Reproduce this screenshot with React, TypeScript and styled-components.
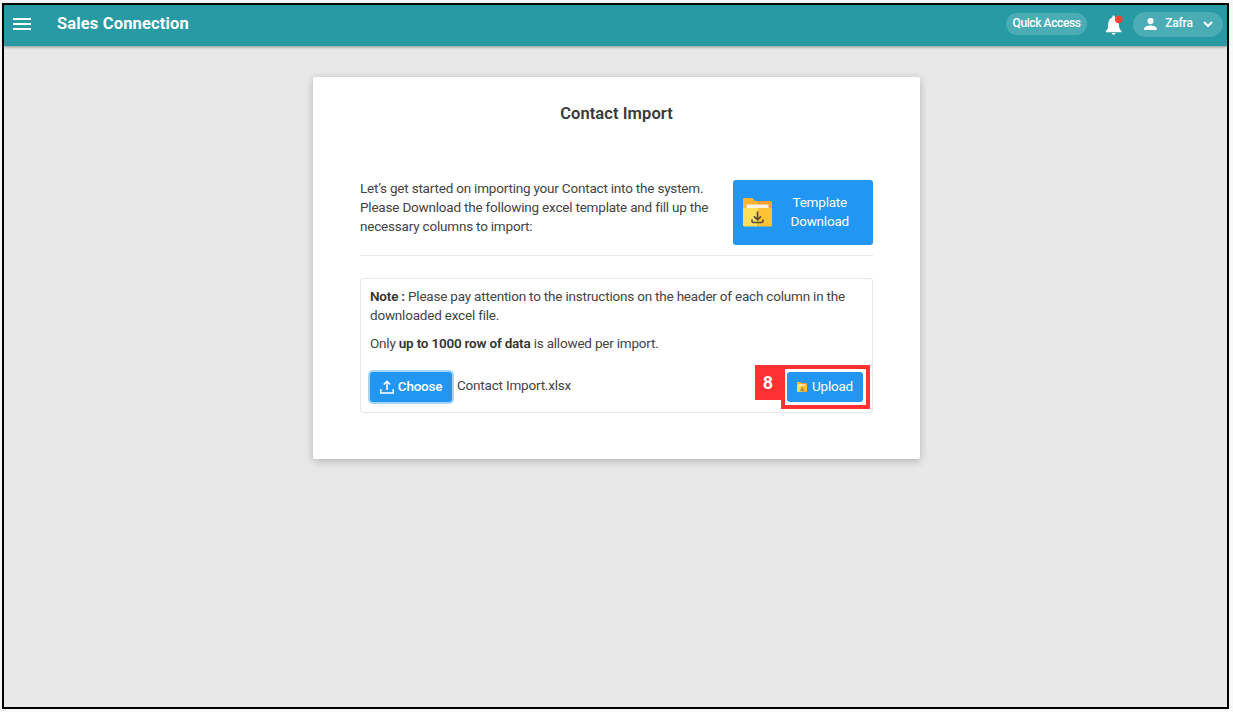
import React from "react";
import styled, { createGlobalStyle } from "styled-components";

const GlobalStyle = createGlobalStyle`
  * { box-sizing: border-box; }
  body {
    margin: 0;
    background: #f8f8f8;
    font-family: Roboto, "Liberation Sans", sans-serif;
    color: #444;
  }
  button { font: inherit; border: 0; cursor: pointer; }
`;

const Page = styled.div`
  height: 712px;
  padding: 3px 4px 3px 2px;
`;

const Frame = styled.div`
  height: 706px;
  border: 2px solid #000;
  background: #e8e8e8;
  display: flex;
  flex-direction: column;
  align-items: center;
`;

const TopBar = styled.header`
  align-self: stretch;
  flex: none;
  height: 41px;
  padding: 0 4px 0 9px;
  display: flex;
  align-items: center;
  background: #289aa4;
  color: #fff;
  box-shadow: 0 1px 3px rgba(0, 0, 0, 0.4);
`;

const MenuIcon = styled.svg`
  width: 18px;
  height: 14px;
  margin-top: -3px;
`;

const Brand = styled.div`
  flex: 1;
  margin: -4px 0 0 26px;
  font-size: 16.5px;
  font-weight: 700;
  letter-spacing: 0.15px;
`;

const Pill = styled.button<{ $width: number; $height: number; $spacing: number }>`
  width: ${(p) => p.$width}px;
  height: ${(p) => p.$height}px;
  padding: 0 0 2px;
  margin-top: -3px;
  border-radius: 13px;
  display: flex;
  align-items: center;
  justify-content: center;
  background: #4aacb4;
  color: #fff;
  font-size: 12px;
  font-weight: 500;
  letter-spacing: ${(p) => p.$spacing}px;
`;

const BellIcon = styled.svg`
  width: 19px;
  height: 20px;
  margin: -1px 9px 0 18px;
`;

const UserIcon = styled.svg`
  width: 13px;
  height: 12px;
  margin: 2px 8px 0 1px;
`;

const Chevron = styled.svg`
  width: 10px;
  height: 7px;
  margin: 3px 0 0 10px;
`;

const Card = styled.main`
  width: 607px;
  height: 382px;
  margin-top: 31px;
  margin-left: 2px;
  padding: 27px 47px 0;
  border-radius: 2px;
  background: #fff;
  box-shadow: 0 2px 9px rgba(0, 0, 0, 0.24);
`;

const Title = styled.h1`
  margin: 0;
  font-size: 16.5px;
  line-height: 20px;
  font-weight: 600;
  letter-spacing: 0.08px;
  text-align: center;
  color: #383838;
`;

const Intro = styled.section`
  height: 76px;
  margin-top: 56px;
  display: flex;
  justify-content: space-between;
  border-bottom: 1px solid #e6e6e6;
`;

const Text = styled.p`
  margin: -1px 0 0;
  font-size: 13.5px;
  line-height: 19px;
  letter-spacing: -0.2px;
  white-space: nowrap;
  b { font-weight: 600; color: #333; }
`;

const DownloadButton = styled.button`
  width: 140px;
  height: 65px;
  padding: 0 24px 2px 10px;
  display: flex;
  align-items: center;
  justify-content: space-between;
  border-radius: 3px;
  background: #2196f3;
  color: #fff;
  font-size: 13.5px;
  letter-spacing: -0.2px;
  line-height: 19px;
  svg { margin-top: 2px; }
`;

const NoteBox = styled.section`
  height: 135px;
  margin-top: 22px;
  padding: 9px 2px 0 9px;
  border: 1px solid #e6e6e6;
  border-radius: 3px;
`;

const Limit = styled(Text)`
  margin-top: 9px;
`;

const Actions = styled.div`
  margin-top: 12px;
  display: flex;
  align-items: flex-start;
`;

const ChooseButton = styled.button`
  width: 82px;
  height: 30px;
  margin: 7px 5px 0 0;
  padding: 0 0 2px;
  display: flex;
  align-items: center;
  justify-content: center;
  gap: 4px;
  border-radius: 3px;
  background: #2196f3;
  box-shadow: 0 0 0 2px #a6d5fa;
  color: #fff;
  font-size: 13.5px;
  font-weight: 500;
  letter-spacing: -0.25px;
  svg { margin-top: 2px; }
`;

const FileName = styled(Text)`
  flex: 1;
  margin-top: 11px;
`;

const StepBadge = styled.div`
  width: 26px;
  height: 35px;
  display: flex;
  align-items: center;
  justify-content: center;
  background: #ff3131;
  color: #fff;
  font-size: 18px;
  font-weight: 700;
`;

const Highlight = styled.div`
  width: 89px;
  height: 44px;
  padding: 3px 2px;
  border: 4px solid #ff3131;
`;

const UploadButton = styled.button`
  width: 76px;
  height: 30px;
  padding: 0 0 2px;
  display: flex;
  align-items: center;
  justify-content: center;
  gap: 5px;
  border-radius: 3px;
  background: #2196f3;
  color: #fff;
  font-size: 13.5px;
  letter-spacing: -0.2px;
  svg { margin-top: 2px; }
`;

const FolderIcon = ({ size }: { size: number }) => (
  <svg width={size} height={size} viewBox="0 0 29 29">
    <path d="M1.500 0H9l3 3h15.500a1.500 1.500 0 0 1 1.500 1.500V20H0V1.500A1.500 1.500 0 0 1 1.500 0z" fill="#ff9f33" />
    <path d="M1.500 0H9l3 3h2.500V20H0V1.500A1.500 1.500 0 0 1 1.500 0z" fill="#ffb52e" />
    <path d="M3.500 6.500h22V12h-22z" fill="#fdf0e4" />
    <path d="M0 10h14.500v18.500h-13A1.500 1.500 0 0 1 0 27z" fill="#ffdf5a" />
    <path d="M14.500 10H29v17a1.500 1.500 0 0 1-1.500 1.500h-13z" fill="#ffc233" />
    <path d="M14.500 13.500v8M11 18.300l3.500 3.500 3.500-3.500M9 21.500v1.500a1.500 1.500 0 0 0 1.500 1.500h8a1.500 1.500 0 0 0 1.500-1.500v-1.500" fill="none" stroke="#584b41" strokeWidth="1.700" />
  </svg>
);

export default function App() {
  return (
    <>
      <GlobalStyle />
      <Page>
        <Frame>
          <TopBar>
            <MenuIcon viewBox="0 0 18 14">
              <path d="M0 2h18M0 7h18M0 12h18" stroke="#fff" strokeWidth="2" />
            </MenuIcon>
            <Brand>Sales Connection</Brand>
            <Pill $width={81} $height={22} $spacing={-0.4}>Quick Access</Pill>
            <BellIcon viewBox="0 0 19 20">
              <path d="M.8 17.200v-1.200C3 14.500 3 12.500 3.300 9c.3-3.600 1.400-5.800 4-6.500V1.900a1.300 1.300 0 0 1 2.600 0v.6c2.600.7 3.700 2.900 4 6.500.3 3.500.3 5.500 2.500 7v1.200zM6.700 18h3.800a1.900 1.700 0 0 1-3.800 0z" fill="#fff" />
              <circle cx="13.800" cy="4.400" r="3.800" fill="#f44336" />
            </BellIcon>
            <Pill $width={90} $height={25} $spacing={-0.2}>
              <UserIcon viewBox="0 0 13 12">
                <circle cx="6.500" cy="3.100" r="3.100" fill="#fff" />
                <path d="M.2 12v-1.500C.2 8.300 4 7.400 6.500 7.400s6.300.9 6.300 3.100V12z" fill="#fff" />
              </UserIcon>
              Zafra
              <Chevron viewBox="0 0 10 7">
                <path d="M1 1l4 4 4-4" fill="none" stroke="#fff" strokeWidth="2" />
              </Chevron>
            </Pill>
          </TopBar>
          <Card>
            <Title>Contact Import</Title>
            <Intro>
              <Text>
                Let’s get started on importing your Contact into the system.<br />
                Please Download the following excel template and fill up the<br />
                necessary columns to import:
              </Text>
              <DownloadButton>
                <FolderIcon size={29} />
                <span>Template<br />Download</span>
              </DownloadButton>
            </Intro>
            <NoteBox>
              <Text>
                <b>Note :</b> Please pay attention to the instructions on the header of each column in the<br />
                downloaded excel file.
              </Text>
              <Limit>
                Only <b>up to 1000 row of data</b> is allowed per import.
              </Limit>
              <Actions>
                <ChooseButton>
                  <svg width="14" height="14" viewBox="0 0 14 14" fill="none" stroke="#fff" strokeWidth="1.500">
                    <path d="M7 10V1.500M3.800 4.500L7 1.300l3.200 3.200M.8 9v4h12.400V9" />
                  </svg>
                  Choose
                </ChooseButton>
                <FileName>Contact Import.xlsx</FileName>
                <StepBadge>8</StepBadge>
                <Highlight>
                  <UploadButton>
                    <FolderIcon size={10} />
                    Upload
                  </UploadButton>
                </Highlight>
              </Actions>
            </NoteBox>
          </Card>
        </Frame>
      </Page>
    </>
  );
}
